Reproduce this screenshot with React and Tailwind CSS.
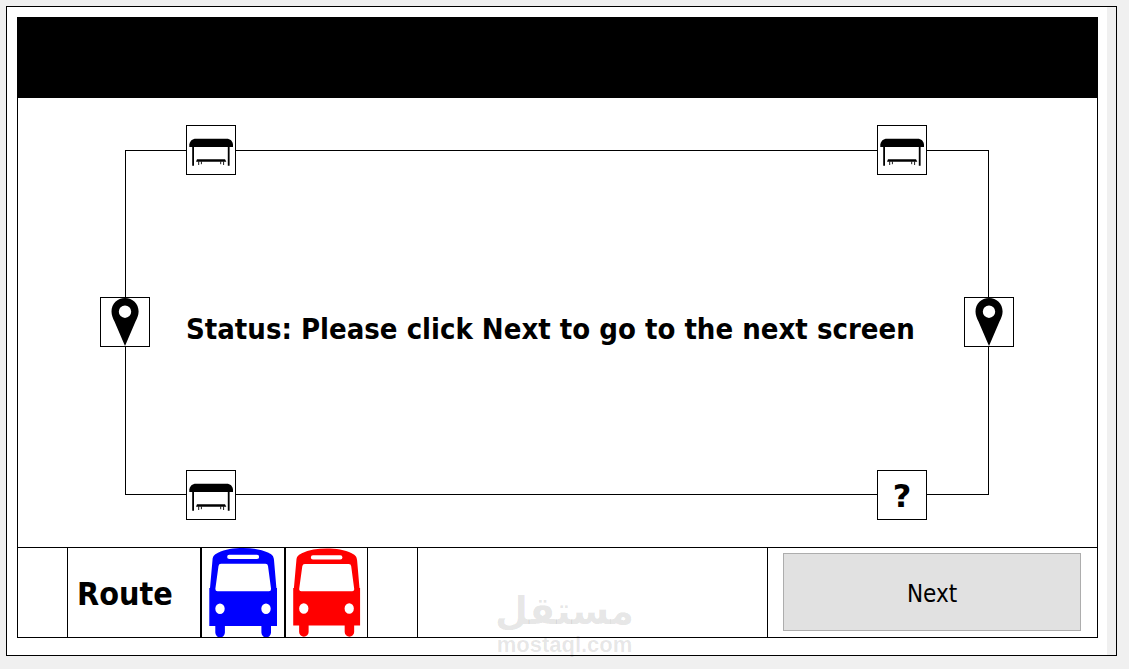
import { useState } from "react";

const ShelterIcon = () => (
  <svg viewBox="0 0 48 48" className="w-12 h-12" aria-hidden="true">
    <path d="M2.3 21V18.5C3 15 5 12.7 9 12.7H39.5C43.5 12.7 45.5 15 46 18.5V21Z" />
    <path d="M5.2 20h1.8v19.8h-1.8zM40.8 20h1.8v19.8h-1.8z" />
    <path d="M10 33.2H38L39.3 35.8H9Z" />
    <path
      d="M11.7 35.5v3.5M14.4 35.5v2.7M33.7 35.5v2.7M36.6 35.5v3.5"
      stroke="black"
      strokeWidth="0.9"
    />
  </svg>
);

const PinIcon = () => (
  <svg viewBox="0 0 48 48" className="w-12 h-12" aria-hidden="true">
    <path
      fillRule="evenodd"
      d="M24 0C31.5 0 37.6 5.8 37.6 13.4C37.6 17 36 20.5 34.5 23.5L24 48L13.5 23.5C12 20.5 10.5 17 10.5 13.4C10.5 5.8 16.5 0 24 0ZM24 7.5a6.2 6.2 0 1 0 0 12.4a6.2 6.2 0 1 0 0-12.4Z"
    />
  </svg>
);

const BusIcon = ({ className }) => (
  <svg viewBox="0 0 82 89" className={className} aria-hidden="true">
    <path
      fill="currentColor"
      fillRule="evenodd"
      d="M7.3 78V40H8L10.5 12C10.8 8 12.5 6.5 16 4.8C23 1.4 32 0 41.2 0C50.5 0 59.5 1.4 66.5 4.8C70 6.5 71.6 8 72 12L74.4 40H75V78H69V84.5A4.7 4.7 0 0 1 59.4 84.5V78H22.9V84.5A4.7 4.7 0 0 1 13.3 84.5V78ZM27.3 6.8a2.1 2.1 0 0 0 0 4.3H55a2.1 2.1 0 0 0 0-4.3ZM19 15.7Q16.8 15.7 16.5 18L13.4 40.5Q13.1 43.3 15.5 43.3H67Q69.3 43.3 69 40.5L66 18Q65.7 15.7 63.5 15.7ZM18 55.4a4.7 5.3 0 1 0 0 10.6a4.7 5.3 0 1 0 0-10.6ZM64 55.4a4.7 5.3 0 1 0 0 10.6a4.7 5.3 0 1 0 0-10.6Z"
    />
  </svg>
);

const Stop = ({ children }) => (
  <div className="flex shrink-0 items-center justify-center w-[50px] h-[50px] bg-white border border-black">
    {children}
  </div>
);

const Watermark = () => (
  <div className="absolute bottom-3 left-1/2 -translate-x-1/2 flex flex-col items-center font-bold text-black/10 pointer-events-none">
    <span
      dir="rtl"
      lang="ar"
      className="font-['DejaVu_Sans',sans-serif] text-[38px] leading-[44px]"
    >
      مستقل
    </span>
    <span className="font-['Liberation_Sans',sans-serif] text-[22px] leading-[24px]">
      mostaql.com
    </span>
  </div>
);

const App = () => {
  const [status] = useState("Please click Next to go to the next screen");

  return (
    <div className="relative min-h-screen bg-[#f0f0f0] pt-[6px] pl-[6px] pr-3 pb-[13px] text-black font-['DejaVu_Sans_Condensed','DejaVu_Sans',sans-serif]">
      <div className="border border-black pr-[9px]">
        <div className="bg-white pt-[10px] pl-[10px] pr-[9px] pb-[17px]">
          <main className="border border-black">
            <header className="h-20 bg-black" />

            {/* Route map */}
            <section className="relative h-[449px] py-[27px] pl-[107px] pr-[108px]">
              <div className="absolute top-[52px] bottom-[52px] left-[107px] right-[108px] border border-black" />
              <div className="relative flex flex-col justify-between h-full">
                <div className="flex justify-between pl-[61px] pr-[62px]">
                  <Stop>
                    <ShelterIcon />
                  </Stop>
                  <Stop>
                    <ShelterIcon />
                  </Stop>
                </div>
                <div className="flex items-center justify-between -mx-[25px] mb-px">
                  <Stop>
                    <PinIcon />
                  </Stop>
                  <p className="grow pl-9 pt-[14px] text-[29px] leading-9 font-bold whitespace-nowrap">
                    Status: {status}
                  </p>
                  <Stop>
                    <PinIcon />
                  </Stop>
                </div>
                <div className="flex justify-between pl-[61px] pr-[62px]">
                  <Stop>
                    <ShelterIcon />
                  </Stop>
                  <Stop>
                    <span className="pt-[2px] font-['DejaVu_Sans',sans-serif] text-[32px] leading-10 font-bold">
                      ?
                    </span>
                  </Stop>
                </div>
              </div>
            </section>

            {/* Bottom bar */}
            <footer className="flex h-[90px] border-t border-black">
              <div className="w-[50px] border-r border-black" />
              <div className="flex items-center w-[134px] pl-[9px] pt-[2px] border-r-2 border-black">
                <h2 className="text-[32px] leading-10 font-bold">Route</h2>
              </div>
              <div className="w-[84px] border-r-2 border-black">
                <BusIcon className="w-full h-full text-[#0000ff]" />
              </div>
              <div className="w-[82px] border-r border-black">
                <BusIcon className="w-full h-full text-[#ff0000]" />
              </div>
              <div className="w-[50px] border-r border-black" />
              <div className="grow border-r border-black" />
              <div className="w-[329px] pt-[5px] pb-[6px] pl-[15px] pr-4">
                <button
                  type="button"
                  className="w-full h-full pt-1 bg-[#e1e1e1] border border-[#adadad] text-[24px] leading-8"
                >
                  Next
                </button>
              </div>
            </footer>
          </main>
        </div>
      </div>
      <Watermark />
    </div>
  );
};

export default App;
